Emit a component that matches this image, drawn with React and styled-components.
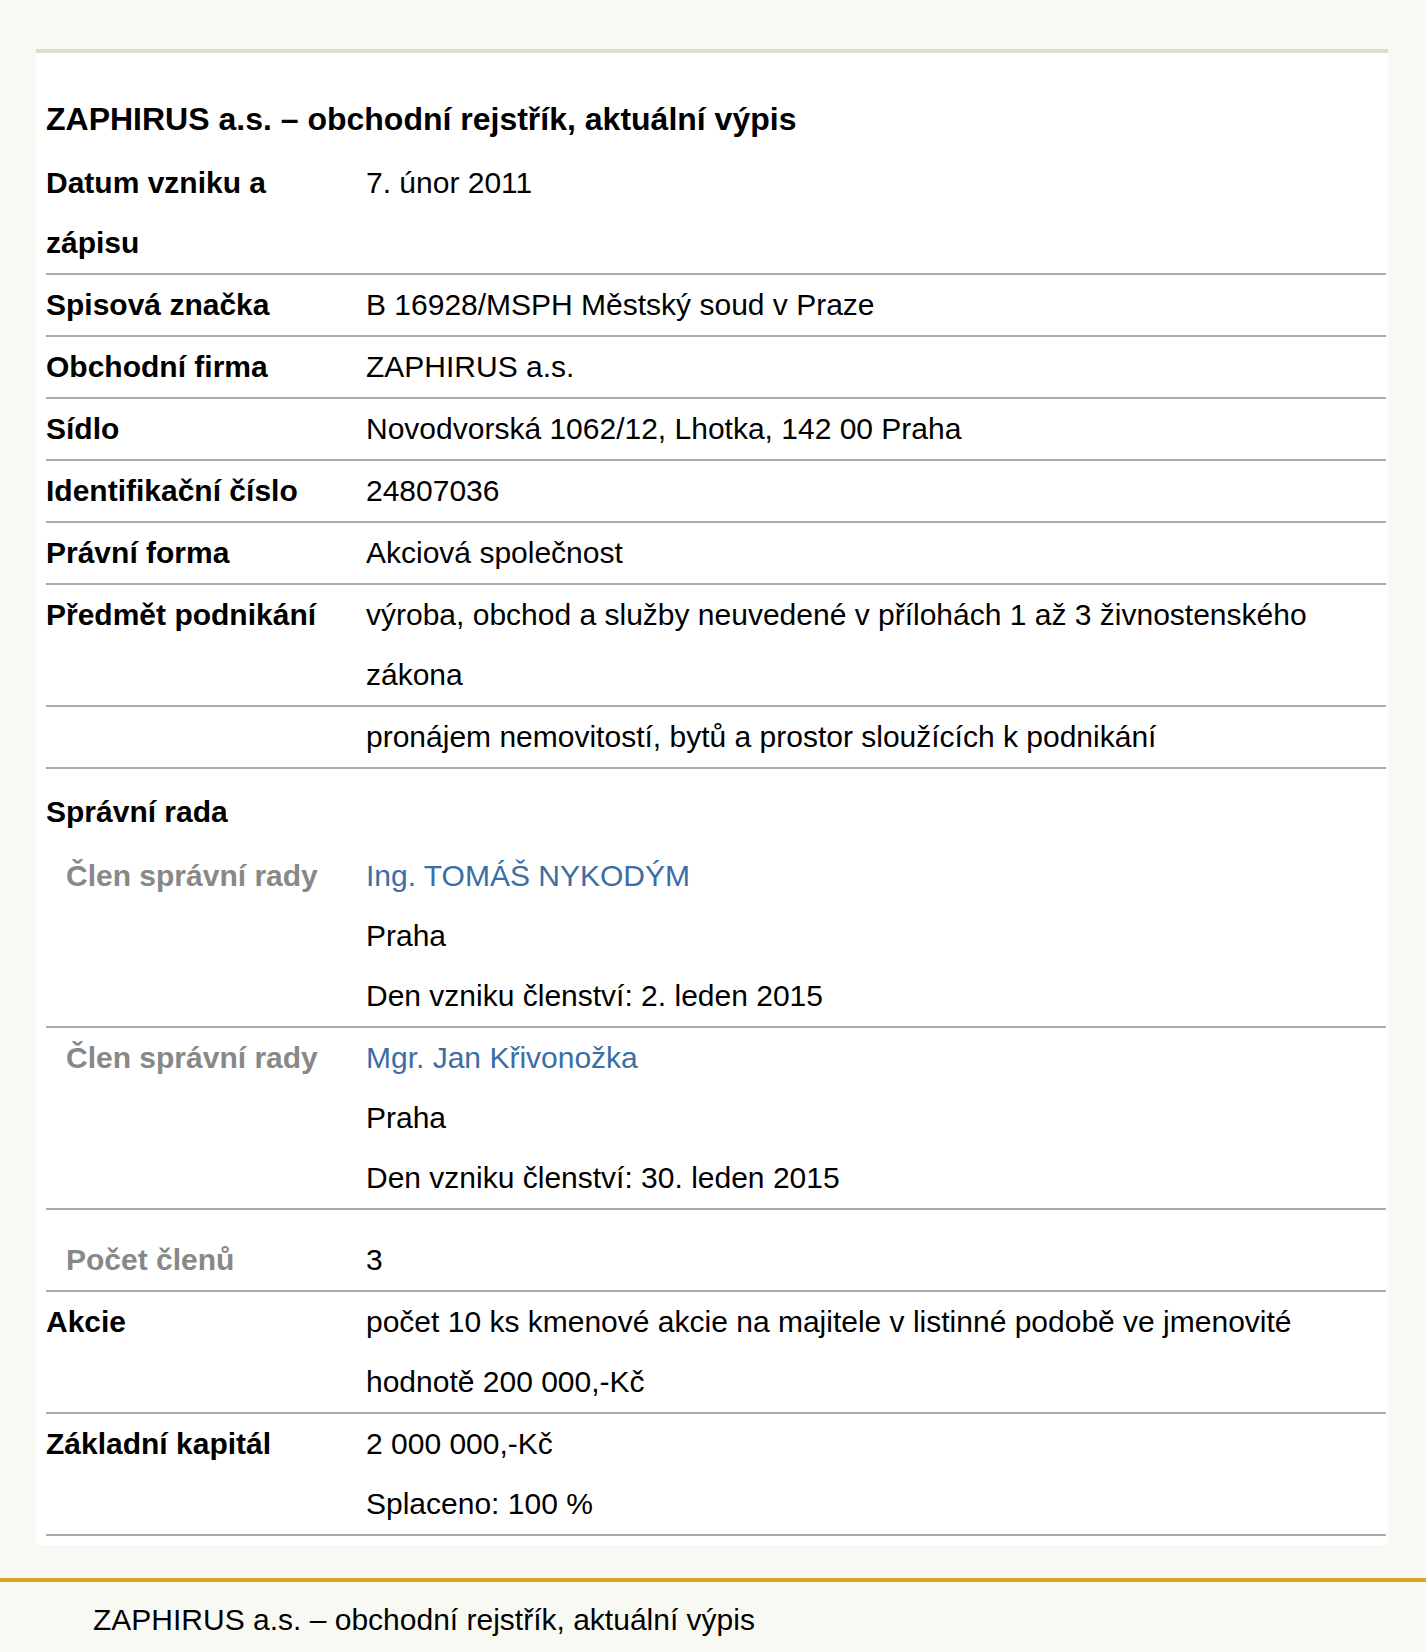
import React from "react";
import styled, { createGlobalStyle } from "styled-components";

const GlobalStyle = createGlobalStyle`
  body {
    margin: 0;
    background: #f9f9f4;
    font-family: "Liberation Sans", Arial, sans-serif;
    color: #000;
  }
`;

const rows = [
  { label: "Datum vzniku a zápisu", values: ["7. únor 2011"] },
  { label: "Spisová značka", values: ["B 16928/MSPH Městský soud v Praze"] },
  { label: "Obchodní firma", values: ["ZAPHIRUS a.s."] },
  { label: "Sídlo", values: ["Novodvorská 1062/12, Lhotka, 142 00 Praha"] },
  { label: "Identifikační číslo", values: ["24807036"] },
  { label: "Právní forma", values: ["Akciová společnost"] },
  {
    label: "Předmět podnikání",
    values: [
      "výroba, obchod a služby neuvedené v přílohách 1 až 3 živnostenského zákona",
    ],
  },
  { label: "", values: ["pronájem nemovitostí, bytů a prostor sloužících k podnikání"] },
];

const members = [
  {
    name: "Ing. TOMÁŠ NYKODÝM",
    city: "Praha",
    since: "Den vzniku členství: 2. leden 2015",
  },
  {
    name: "Mgr. Jan Křivonožka",
    city: "Praha",
    since: "Den vzniku členství: 30. leden 2015",
  },
];

const tail = [
  {
    label: "Akcie",
    values: [
      "počet 10 ks kmenové akcie na majitele v listinné podobě ve jmenovité hodnotě 200 000,-Kč",
    ],
  },
  { label: "Základní kapitál", values: ["2 000 000,-Kč", "Splaceno: 100 %"] },
];

const App = () => {
  return (
    <>
      <GlobalStyle />
      <Page>
        <Panel>
          <Title>ZAPHIRUS a.s. – obchodní rejstřík, aktuální výpis</Title>
          {rows.map((row, i) => (
            <Row key={i}>
              <Label>{row.label}</Label>
              <Value>
                {row.values.map((v) => (
                  <div key={v}>{v}</div>
                ))}
              </Value>
            </Row>
          ))}

          <SectionHeading>Správní rada</SectionHeading>
          {members.map((m) => (
            <Row key={m.name}>
              <Label $indent $muted>
                Člen správní rady
              </Label>
              <Value>
                <PersonLink href="#">{m.name}</PersonLink>
                <div>{m.city}</div>
                <div>{m.since}</div>
              </Value>
            </Row>
          ))}
          <Row $padTop={20}>
            <Label $indent $muted>
              Počet členů
            </Label>
            <Value>3</Value>
          </Row>

          {tail.map((row) => (
            <Row key={row.label}>
              <Label>{row.label}</Label>
              <Value>
                {row.values.map((v) => (
                  <div key={v}>{v}</div>
                ))}
              </Value>
            </Row>
          ))}
        </Panel>
      </Page>
      <Footer>ZAPHIRUS a.s. – obchodní rejstřík, aktuální výpis</Footer>
    </>
  );
};

const Page = styled.div`
  padding: 49px 38px 0 36px;
`;

const Panel = styled.div`
  background: #ffffff;
  border-top: 4px solid #dcdcd2;
  padding: 36px 2px 9px 10px;
`;

const Title = styled.h1`
  margin: 0 0 4px;
  font-size: 32px;
  line-height: 60px;
  font-weight: bold;
`;

const Row = styled.div`
  display: grid;
  grid-template-columns: 320px 1fr;
  padding-top: ${(p) => p.$padTop || 0}px;
  border-bottom: 2px solid #aaaaaa;
  font-size: 30px;
  line-height: 60px;
`;

const Label = styled.div`
  font-weight: bold;
  padding-left: ${(p) => (p.$indent ? 20 : 0)}px;
  padding-right: 20px;
  color: ${(p) => (p.$muted ? "#888888" : "#000000")};
`;

const Value = styled.div`
  min-width: 0;
`;

const PersonLink = styled.a`
  display: block;
  color: #3a6ea5;
  text-decoration: none;
`;

const SectionHeading = styled.h2`
  margin: 0;
  padding: 13px 0 4px;
  font-size: 30px;
  line-height: 60px;
  font-weight: bold;
`;

const Footer = styled.footer`
  margin-top: 33px;
  border-top: 4px solid #daa520;
  padding: 8px 0 0 93px;
  font-size: 30px;
  line-height: 60px;
`;

export default App;
